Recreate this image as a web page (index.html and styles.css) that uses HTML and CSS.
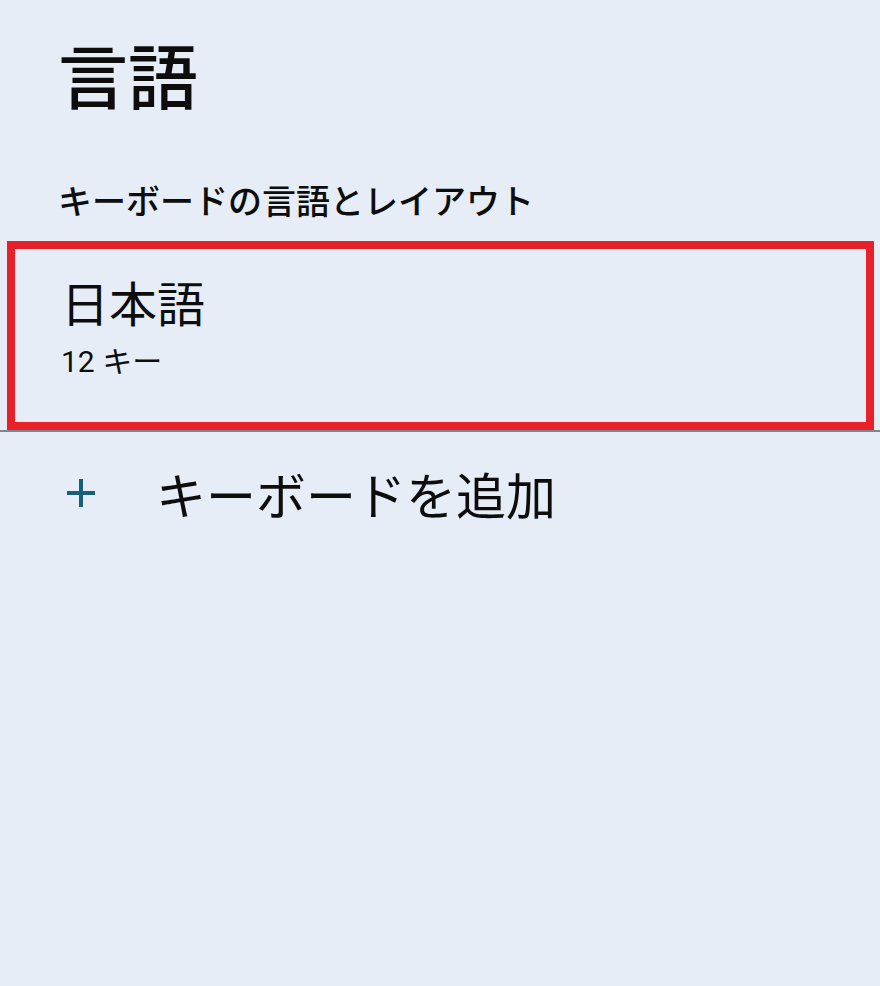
FILE: index.html
```html
<!DOCTYPE html>
<html lang="ja">
<head>
<meta charset="utf-8">
<title>言語</title>
<link rel="stylesheet" href="styles.css">
</head>
<body>
<main class="page">
  <h1 class="title">言語</h1>
  <h2 class="section">キーボードの言語とレイアウト</h2>
  <div class="item">
    <div class="item-name">日本語</div>
    <div class="item-sub">12 キー</div>
  </div>
  <div class="divider"></div>
  <div class="add-row">
    <svg class="plus" width="30" height="30" viewBox="0 0 30 30" aria-hidden="true">
      <path d="M15 1 V29 M1 15 H29" stroke="#17607c" stroke-width="4" fill="none"/>
    </svg>
    <span class="add-label">キーボードを追加</span>
  </div>
</main>
</body>
</html>
```
FILE: styles.css
```css
html, body {
  margin: 0;
  padding: 0;
  background: #e6edf7;
}
body {
  width: 880px;
  height: 986px;
  font-family: "Noto Sans CJK JP", "Noto Sans", sans-serif;
  color: #0d0d0d;
}
.page {
  display: flex;
  flex-direction: column;
}
.title {
  margin: 0;
  padding: 34px 0 0 58px;
  font-size: 70px;
  line-height: 80px;
  font-weight: 500;
}
.section {
  margin: 0;
  padding: 66px 0 0 58px;
  font-size: 34px;
  line-height: 40px;
  font-weight: 500;
}
.item {
  margin: 21px 6px 0 7px;
  border: 8px solid #e8202a;
  padding: 24px 0 43px 46px;
  display: flex;
  flex-direction: column;
}
.item-name {
  font-size: 48px;
  line-height: 56px;
  font-weight: 400;
}
.item-sub {
  margin-top: 16px;
  font-family: "Roboto", "Noto Sans CJK JP", sans-serif;
  font-size: 30px;
  line-height: 34px;
}
.divider {
  height: 2px;
  background: #7f858c;
}
.add-row {
  display: flex;
  align-items: center;
  padding: 28px 0 0 66px;
  gap: 60px;
}
.plus {
  flex: none;
}
.add-label {
  font-size: 50px;
  line-height: 66px;
}
```
